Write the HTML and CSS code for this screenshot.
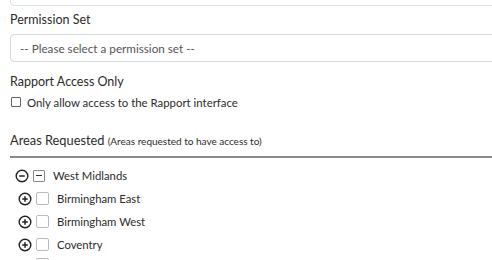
FILE: index.html
```html
<!DOCTYPE html>
<html lang="en">
<head>
    <meta charset="UTF-8">
    <title>User permissions</title>
    <link rel="stylesheet" href="styles.css">
</head>
<body>
<div class="form">
    <div class="field field-cut">
        <div class="control control-top"></div>
    </div>

    <div class="field">
        <label class="label">Permission Set</label>
        <div class="control select">-- Please select a permission set --</div>
    </div>

    <div class="field">
        <label class="label label-gap">Rapport Access Only</label>
        <label class="check-line"><span class="box"></span>Only allow access to the Rapport interface</label>
    </div>

    <div class="areas">
        <h4 class="areas-title">Areas Requested <small>(Areas requested to have access to)</small></h4>
        <ul class="tree">
            <li class="node open">
                <svg class="toggle" width="14" height="14" viewBox="0 0 14 14"><circle cx="7" cy="7" r="5.8" fill="none" stroke="#222" stroke-width="1.4"/><path d="M4.2 7h5.6" stroke="#222" stroke-width="1.5"/></svg>
                <span class="box part"></span>
                <span class="name">West Midlands</span>
            </li>
            <li class="node child">
                <svg class="toggle" width="14" height="14" viewBox="0 0 14 14"><circle cx="7" cy="7" r="5.8" fill="none" stroke="#222" stroke-width="1.4"/><path d="M4.2 7h5.6M7 4.2v5.6" stroke="#222" stroke-width="1.5"/></svg>
                <span class="box big"></span>
                <span class="name">Birmingham East</span>
            </li>
            <li class="node child">
                <svg class="toggle" width="14" height="14" viewBox="0 0 14 14"><circle cx="7" cy="7" r="5.8" fill="none" stroke="#222" stroke-width="1.4"/><path d="M4.2 7h5.6M7 4.2v5.6" stroke="#222" stroke-width="1.5"/></svg>
                <span class="box big"></span>
                <span class="name">Birmingham West</span>
            </li>
            <li class="node child">
                <svg class="toggle" width="14" height="14" viewBox="0 0 14 14"><circle cx="7" cy="7" r="5.8" fill="none" stroke="#222" stroke-width="1.4"/><path d="M4.2 7h5.6M7 4.2v5.6" stroke="#222" stroke-width="1.5"/></svg>
                <span class="box big"></span>
                <span class="name">Coventry</span>
            </li>
            <li class="node child last">
                <span class="toggle-space"></span>
                <span class="box big"></span>
            </li>
        </ul>
    </div>
</div>
</body>
</html>
```

FILE: styles.css
```css
html,body{
    margin: 0;
    padding: 0;
    background-color: #fff;
    overflow: hidden;
}
body{
    font-family: Lato, "Open Sans", sans-serif;
    font-size: 12.5px;
    color: #2b2b2b;
}
.form{
    padding-left: 10px;
    width: 520px;
}
.field-cut{
    margin-top: -24px;
}
.control{
    border: 1px solid #d6dbe0;
    border-radius: 4px;
    box-sizing: border-box;
}
.control-top{
    height: 30px;
    border-color: #dbe6e2;
}
.label{
    display: block;
    margin-top: 4px;
    height: 20px;
    line-height: 20px;
}
.label-gap{
    margin-top: 10px;
}
.select{
    margin-top: 4px;
    height: 28px;
    line-height: 26px;
    padding-left: 9px;
    font-size: 11.7px;
    color: #555;
}
.check-line{
    display: flex;
    align-items: center;
    height: 20px;
    font-size: 11.4px;
}
.box{
    display: inline-block;
    width: 8px;
    height: 8px;
    border: 1px solid #666;
    border-radius: 1px;
    margin: 0 6px 0 1px;
}
.areas{
    margin-top: 18px;
}
.areas-title{
    margin: 0;
    font-weight: normal;
    font-size: 12.8px;
    line-height: 20px;
    padding-bottom: 5px;
    border-bottom: 2px solid #8a8a8a;
}
.areas-title small{
    font-size: 10px;
}
.tree{
    list-style: none;
    margin: 0;
    padding: 6px 0 0;
    font-size: 11.3px;
}
.node{
    display: flex;
    align-items: center;
    height: 23px;
}
.toggle{
    flex: none;
}
.toggle-space{
    width: 14px;
}
.node.open{
    padding-left: 5px;
}
.node.child{
    padding-left: 8px;
}
.node.last{
    margin-top: -3px;
}
.box.part{
    width: 10px;
    height: 10px;
    border-color: #888;
    margin: 0 8px 0 4px;
    position: relative;
}
.box.part:after{
    content: '';
    position: absolute;
    left: 2px;
    right: 2px;
    top: 4px;
    height: 1px;
    background-color: #333;
}
.box.big{
    width: 11px;
    height: 11px;
    border-color: #bbb;
    border-radius: 2px;
    margin: 0 8px 0 4px;
}
```
